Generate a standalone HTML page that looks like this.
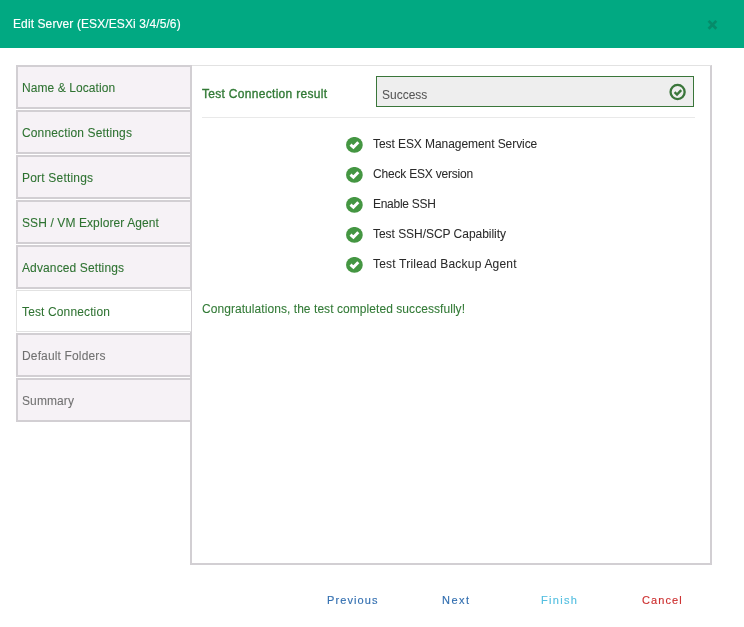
<!DOCTYPE html>
<html>
<head>
<meta charset="utf-8">
<style>
html,body{margin:0;padding:0;width:744px;height:627px;overflow:hidden;background:#fff;}
body{position:relative;-webkit-font-smoothing:antialiased;font-family:"Liberation Sans",sans-serif;font-size:12px;}
.abs{position:absolute;white-space:nowrap;}
span,.abs{will-change:transform;}
.item span,#congr{-webkit-text-stroke:0.08px currentColor;}
#title{-webkit-text-stroke:0.15px currentColor;}
.row span,#sbox span{-webkit-text-stroke:0.05px currentColor;}
.item.active span{-webkit-text-stroke:0.05px currentColor;}
#hdr{position:absolute;left:0;top:0;width:744px;height:48px;background:#01a982;}
#title{left:13px;top:16px;letter-spacing:0.1px;color:#fff;font-size:12px;line-height:16px;}
#close{left:706px;top:19px;width:13px;height:13px;}
.item{position:absolute;left:16px;width:172px;height:40px;border:2px solid #d2cfd3;background:#f6f2f6;}
.item span{position:absolute;left:4px;top:14px;line-height:14px;color:#2e7231;}
.item.active{left:16px;width:174px;height:40px;border:1px solid #e2e2e2;border-right:none;background:#fff;}
.item.active span{left:5px;top:14px;}
.item.dis span{color:#717171;}
#panel{position:absolute;left:190px;top:65px;width:518px;height:497px;border:2px solid #d2cfd3;border-top:1px solid #e2e2e2;background:transparent;}
#tcr{left:202px;top:87px;line-height:14px;letter-spacing:0.3px;-webkit-text-stroke:0.35px currentColor;color:#327a36;}
#sbox{left:376px;top:76px;width:316px;height:29px;border:1px solid #3a763a;background:#eeeeee;}
#sbox span{position:absolute;left:5px;top:11px;line-height:14px;color:#555;}
#sicon{position:absolute;left:292px;top:6px;}
#sep{left:202px;top:117px;width:493px;height:1px;background:#e9e9e9;}
.row{position:absolute;left:346px;height:16px;}
.row svg{position:absolute;left:0;top:0;}
.row span{position:absolute;left:27px;top:0px;line-height:14px;color:#2a2a2a;white-space:nowrap;}
#congr{left:202px;top:302px;line-height:14px;letter-spacing:0.06px;color:#327a36;}
.btn{top:593px;line-height:14px;font-size:11px;letter-spacing:1.1px;-webkit-text-stroke:0.15px currentColor;}
</style>
</head>
<body>
<div id="hdr"></div>
<div class="abs" id="title">Edit Server (ESX/ESXi 3/4/5/6)</div>
<svg class="abs" id="close" viewBox="0 0 13 13"><path d="M2.6 1.9L10.3 9.8M10.3 1.9L2.6 9.8" stroke="#068b6a" stroke-width="2.7"/></svg>

<div id="panel"></div>

<div class="item" style="top:65px"><span style="letter-spacing:0.08px">Name &amp; Location</span></div>
<div class="item" style="top:110px"><span style="letter-spacing:0.14px">Connection Settings</span></div>
<div class="item" style="top:155px"><span style="letter-spacing:0.2px">Port Settings</span></div>
<div class="item" style="top:200px"><span style="letter-spacing:0.1px">SSH / VM Explorer Agent</span></div>
<div class="item" style="top:245px"><span style="letter-spacing:0.12px">Advanced Settings</span></div>
<div class="item active" style="top:290px"><span style="letter-spacing:0.13px">Test Connection</span></div>
<div class="item dis" style="top:333px"><span style="letter-spacing:0.15px">Default Folders</span></div>
<div class="item dis" style="top:378px"><span style="letter-spacing:0.1px">Summary</span></div>

<div id="content">
<div class="abs" id="tcr">Test Connection result</div>
<div class="abs" id="sbox"><span>Success</span>
<svg id="sicon" viewBox="0 0 18 18" width="18" height="18"><circle cx="8.6" cy="9.0" r="7.05" fill="none" stroke="#3a763a" stroke-width="2.3"/><path d="M5.6 9.2L8 11.5L12.2 7.1" fill="none" stroke="#3a763a" stroke-width="2.4"/></svg>
</div>
<div class="abs" id="sep"></div>
<div class="row" style="top:137px"><svg viewBox="0 0 17 17" width="17" height="17"><ellipse cx="8.4" cy="7.9" rx="8.35" ry="7.95" fill="#449642"/><path d="M4.5 7.7L7.4 10.3L12.3 5.2" fill="none" stroke="#fff" stroke-width="2.9"/></svg><span style="letter-spacing:-0.07px">Test ESX Management Service</span></div>
<div class="row" style="top:167px"><svg viewBox="0 0 17 17" width="17" height="17"><ellipse cx="8.4" cy="7.9" rx="8.35" ry="7.95" fill="#449642"/><path d="M4.5 7.7L7.4 10.3L12.3 5.2" fill="none" stroke="#fff" stroke-width="2.9"/></svg><span style="letter-spacing:-0.2px">Check ESX version</span></div>
<div class="row" style="top:197px"><svg viewBox="0 0 17 17" width="17" height="17"><ellipse cx="8.4" cy="7.9" rx="8.35" ry="7.95" fill="#449642"/><path d="M4.5 7.7L7.4 10.3L12.3 5.2" fill="none" stroke="#fff" stroke-width="2.9"/></svg><span style="letter-spacing:-0.28px">Enable SSH</span></div>
<div class="row" style="top:227px"><svg viewBox="0 0 17 17" width="17" height="17"><ellipse cx="8.4" cy="7.9" rx="8.35" ry="7.95" fill="#449642"/><path d="M4.5 7.7L7.4 10.3L12.3 5.2" fill="none" stroke="#fff" stroke-width="2.9"/></svg><span style="letter-spacing:-0.04px">Test SSH/SCP Capability</span></div>
<div class="row" style="top:257px"><svg viewBox="0 0 17 17" width="17" height="17"><ellipse cx="8.4" cy="7.9" rx="8.35" ry="7.95" fill="#449642"/><path d="M4.5 7.7L7.4 10.3L12.3 5.2" fill="none" stroke="#fff" stroke-width="2.9"/></svg><span style="letter-spacing:0.2px">Test Trilead Backup Agent</span></div>
<div class="abs" id="congr">Congratulations, the test completed successfully!</div>
</div>
<div class="abs btn" style="left:327px;color:#336fb0">Previous</div>
<div class="abs btn" style="left:442px;color:#336fb0;letter-spacing:1.5px">Next</div>
<div class="abs btn" style="left:541px;color:#55bfe0;letter-spacing:1.3px">Finish</div>
<div class="abs btn" style="left:642px;color:#cc2e2e;letter-spacing:1.1px">Cancel</div>
</body>
</html>
